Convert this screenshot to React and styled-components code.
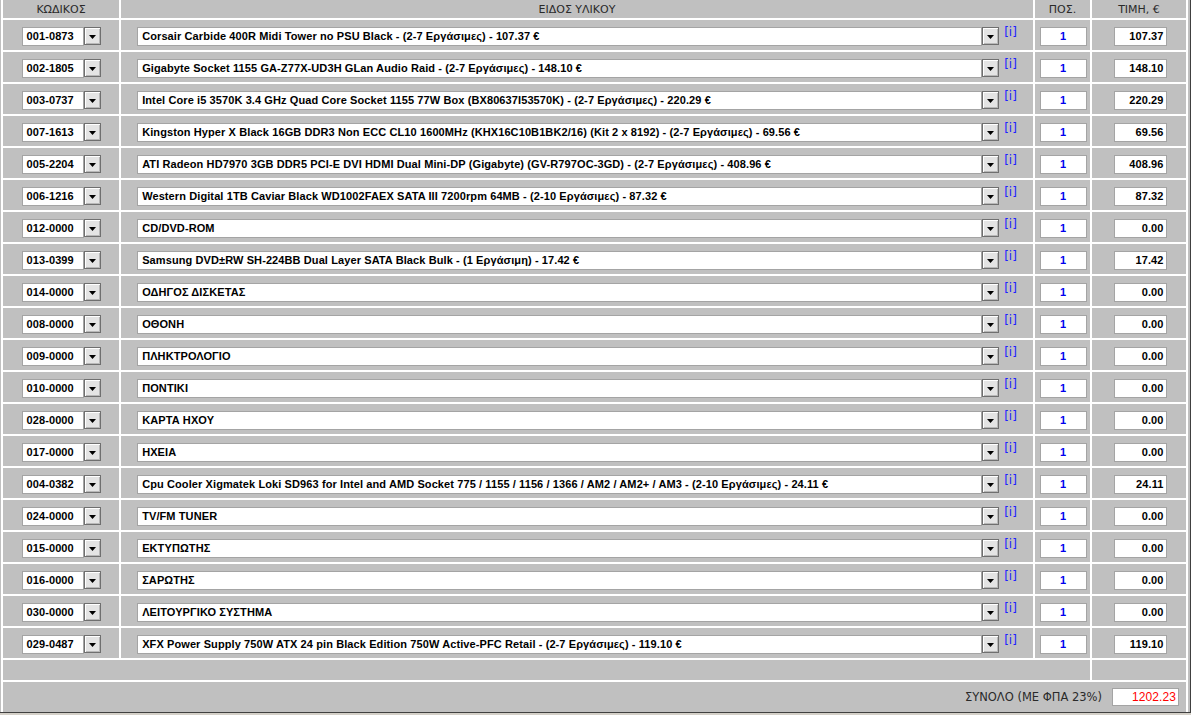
import React from 'react'
import styled, { createGlobalStyle } from 'styled-components'

const rows = [
  ['001-0873', 'Corsair Carbide 400R Midi Tower no PSU Black - (2-7 Εργάσιμες) - 107.37 €', '107.37'],
  ['002-1805', 'Gigabyte Socket 1155 GA-Z77X-UD3H GLan Audio Raid - (2-7 Εργάσιμες) - 148.10 €', '148.10'],
  ['003-0737', 'Intel Core i5 3570K 3.4 GHz Quad Core Socket 1155 77W Box (BX80637I53570K) - (2-7 Εργάσιμες) - 220.29 €', '220.29'],
  ['007-1613', 'Kingston Hyper X Black 16GB DDR3 Non ECC CL10 1600MHz (KHX16C10B1BK2/16) (Kit 2 x 8192) - (2-7 Εργάσιμες) - 69.56 €', '69.56'],
  ['005-2204', 'ATI Radeon HD7970 3GB DDR5 PCI-E DVI HDMI Dual Mini-DP (Gigabyte) (GV-R797OC-3GD) - (2-7 Εργάσιμες) - 408.96 €', '408.96'],
  ['006-1216', 'Western Digital 1TB Caviar Black WD1002FAEX SATA III 7200rpm 64MB - (2-10 Εργάσιμες) - 87.32 €', '87.32'],
  ['012-0000', 'CD/DVD-ROM', '0.00'],
  ['013-0399', 'Samsung DVD±RW SH-224BB Dual Layer SATA Black Bulk - (1 Εργάσιμη) - 17.42 €', '17.42'],
  ['014-0000', 'ΟΔΗΓΟΣ ΔΙΣΚΕΤΑΣ', '0.00'],
  ['008-0000', 'ΟΘΟΝΗ', '0.00'],
  ['009-0000', 'ΠΛΗΚΤΡΟΛΟΓΙΟ', '0.00'],
  ['010-0000', 'ΠΟΝΤΙΚΙ', '0.00'],
  ['028-0000', 'ΚΑΡΤΑ ΗΧΟΥ', '0.00'],
  ['017-0000', 'ΗΧΕΙΑ', '0.00'],
  ['004-0382', 'Cpu Cooler Xigmatek Loki SD963 for Intel and AMD Socket 775 / 1155 / 1156 / 1366 / AM2 / AM2+ / AM3 - (2-10 Εργάσιμες) - 24.11 €', '24.11'],
  ['024-0000', 'TV/FM TUNER', '0.00'],
  ['015-0000', 'ΕΚΤΥΠΩΤΗΣ', '0.00'],
  ['016-0000', 'ΣΑΡΩΤΗΣ', '0.00'],
  ['030-0000', 'ΛΕΙΤΟΥΡΓΙΚΟ ΣΥΣΤΗΜΑ', '0.00'],
  ['029-0487', 'XFX Power Supply 750W ATX 24 pin Black Edition 750W Active-PFC Retail - (2-7 Εργάσιμες) - 119.10 €', '119.10'],
]

function Arrow() {
  return (
    <svg width="7" height="4" viewBox="0 0 7 4">
      <path d="M0 0 H7 L3.5 4 Z" fill="#000" />
    </svg>
  )
}

function Combo({ value, width }) {
  return (
    <ComboWrap>
      <Field w={width}>{value}</Field>
      <DropButton>
        <Arrow />
      </DropButton>
    </ComboWrap>
  )
}

export default function App() {
  return (
    <>
      <GlobalStyle />
      <Frame>
        <Table>
          <HeadCell>ΚΩΔΙΚΟΣ</HeadCell>
          <HeadCell>ΕΙΔΟΣ ΥΛΙΚΟΥ</HeadCell>
          <HeadCell>ΠΟΣ.</HeadCell>
          <HeadCell>ΤΙΜΗ, €</HeadCell>

          {rows.map(([code, name, price]) => (
            <React.Fragment key={code}>
              <RowCell>
                <Combo value={code} width={62} />
              </RowCell>
              <RowCell>
                <Combo value={name} width={845} />
                <InfoLink>[i]</InfoLink>
              </RowCell>
              <RowCell>
                <QtyBox>1</QtyBox>
              </RowCell>
              <RowCell>
                <PriceBox>{price}</PriceBox>
              </RowCell>
            </React.Fragment>
          ))}

          <SpacerCell span={3} />
          <SpacerCell />

          <TotalCell>
            <TotalLabel>ΣΥΝΟΛΟ (ΜΕ ΦΠΑ 23%)</TotalLabel>
            <TotalBox>1202.23</TotalBox>
          </TotalCell>
        </Table>
      </Frame>
      <BottomStrip />
    </>
  )
}

const GlobalStyle = createGlobalStyle`
  html, body {
    margin: 0;
    padding: 0;
    background: #c0c0c0;
    overflow: hidden;
  }
  body {
    font-family: "DejaVu Sans", Verdana, sans-serif;
  }
`

const Frame = styled.div`
  width: 1189px;
  padding-left: 1px;
  background: #c0c0c0;
  border-right: 1px solid #404040;
  border-bottom: 1px solid #404040;
`

const Table = styled.div`
  display: grid;
  grid-template-columns: 116px 912px 55px 94px;
  grid-template-rows: 18px repeat(20, 30px) 20px 30px;
  gap: 2px;
  padding: 0 2px;
  width: fit-content;
  background: #fff;
`

const Cell = styled.div`
  box-sizing: border-box;
  background: #c0c0c0;
  display: flex;
  align-items: center;
  justify-content: center;
`

const RowCell = styled(Cell)`
  padding-top: 2px;
`

const HeadCell = styled(Cell)`
  font-family: "DejaVu Sans", Verdana, sans-serif;
  font-size: 11px;
  color: #2a2a2a;
  padding-top: 1px;
`

const SpacerCell = styled(Cell)`
  grid-column: span ${p => p.span || 1};
`

const TotalCell = styled(Cell)`
  grid-column: 1 / -1;
  justify-content: flex-end;
  gap: 10px;
  padding-right: 7px;
`

const TotalLabel = styled.span`
  font-family: "DejaVu Sans", Verdana, sans-serif;
  font-size: 11.5px;
  color: #2a2a2a;
`

const ComboWrap = styled.div`
  display: flex;
  align-items: center;
`

const Box = styled.div`
  box-sizing: border-box;
  height: 19px;
  background: #fff;
  border: 1px solid #a4a4a4;
  font-family: "Liberation Sans", Arial, sans-serif;
  font-size: 11px;
  font-weight: bold;
  letter-spacing: 0.1px;
  line-height: 17px;
  white-space: nowrap;
  overflow: hidden;
`

const Field = styled(Box)`
  width: ${p => p.w}px;
  padding-left: 4px;
  color: #000;
`

const DropButton = styled.div`
  box-sizing: border-box;
  width: 17px;
  height: 18px;
  display: flex;
  align-items: center;
  justify-content: center;
  background: #e4e4e4;
  border: 1px solid #6f6f6f;
  box-shadow: inset 1px 1px 0 #fff, inset -1px -1px 0 #b8b8b8;
  padding-top: 1px;
`

const InfoLink = styled.span`
  align-self: flex-start;
  margin-top: 4px;
  margin-left: 5px;
  font-family: "DejaVu Sans", Verdana, sans-serif;
  font-size: 12px;
  line-height: 12px;
  color: #2020ff;
  cursor: pointer;
`

const QtyBox = styled(Box)`
  width: 47px;
  text-align: center;
  color: #0000ee;
  margin-left: 1px;
`

const PriceBox = styled(Box)`
  width: 53px;
  text-align: right;
  padding-right: 2px;
  color: #000;
  margin-left: 2px;
`

const TotalBox = styled(Box)`
  width: 67px;
  height: 18px;
  line-height: 16px;
  text-align: right;
  padding-right: 2px;
  font-weight: normal;
  font-size: 12px;
  color: #ff0000;
`

const BottomStrip = styled.div`
  height: 4px;
  background: #d4d0c8;
`
